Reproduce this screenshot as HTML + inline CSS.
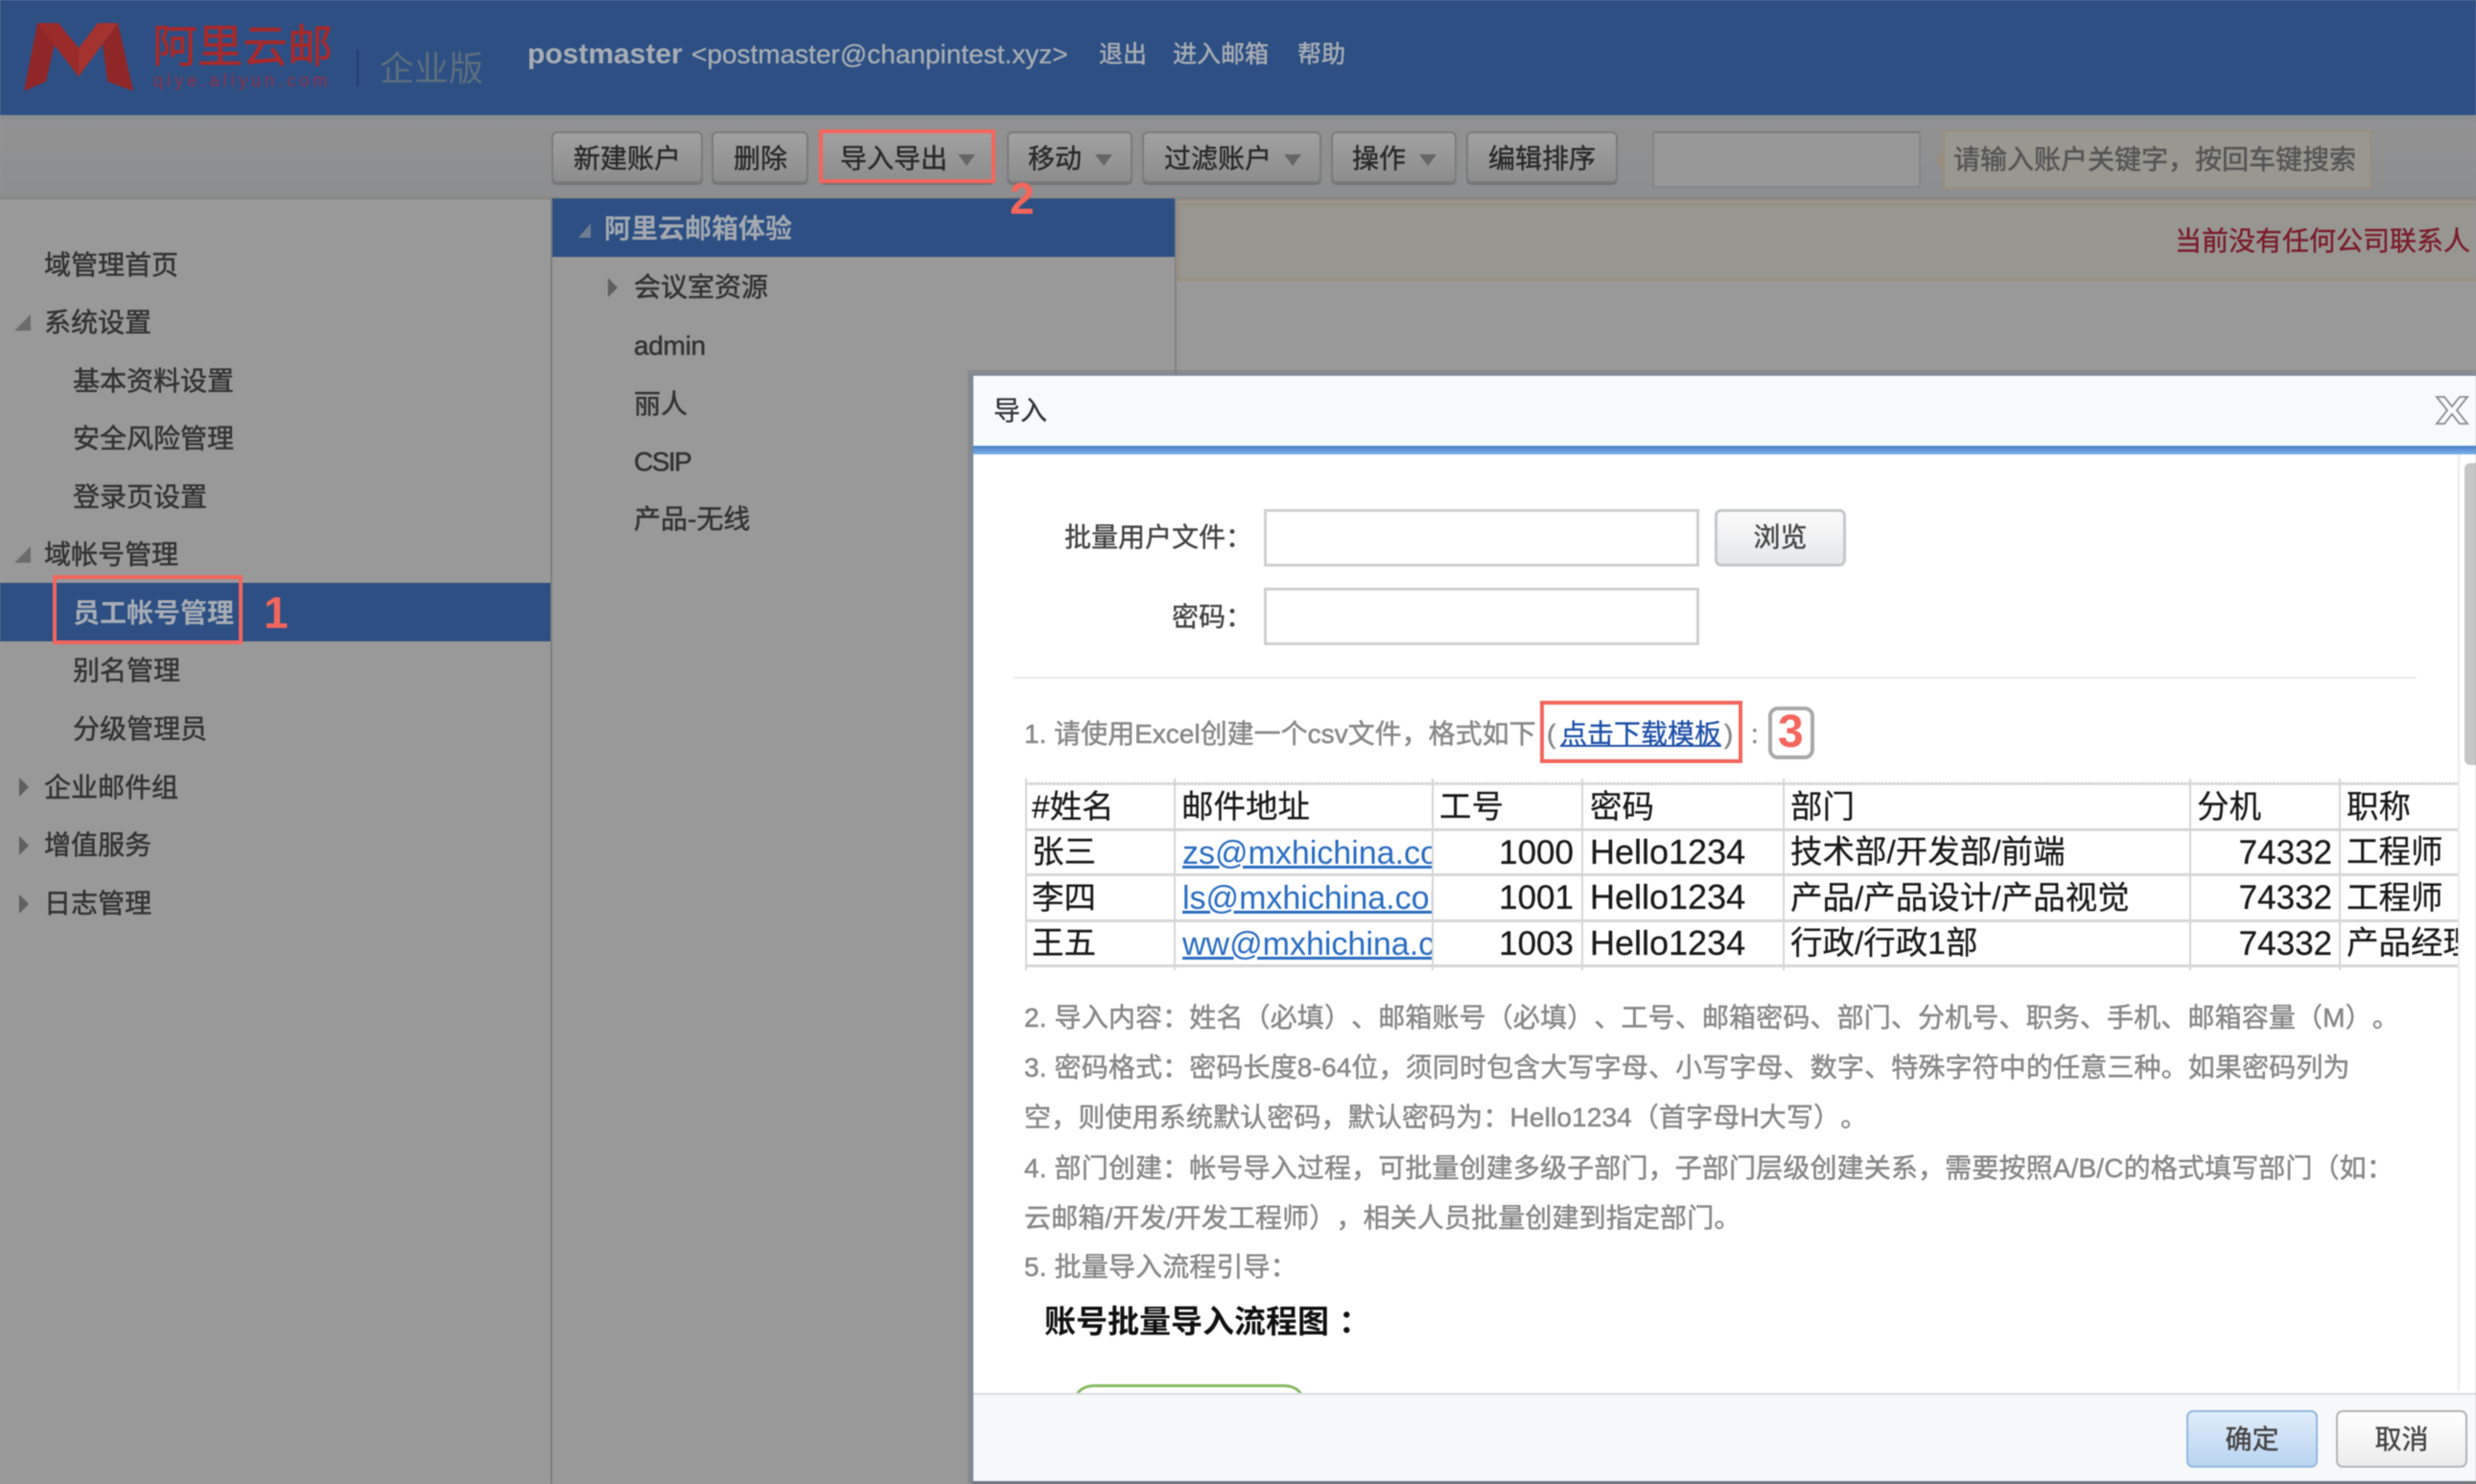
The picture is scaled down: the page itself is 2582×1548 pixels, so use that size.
<!DOCTYPE html>
<html lang="zh-CN"><head><meta charset="utf-8"><title>导入</title>
<style>
*{box-sizing:border-box}
html,body{margin:0;padding:0}
body{width:2582px;height:1548px;overflow:hidden;position:relative;background:#999;font-family:"Liberation Sans","Noto Sans CJK SC",sans-serif;font-size:28px;color:#333;filter:blur(.6px);text-spacing-trim:space-all;text-autospace:no-autospace}
.a{position:absolute}
.t{position:absolute;white-space:nowrap;line-height:40px;height:40px}
.side{color:#333;-webkit-text-stroke:.5px #333}
.btn{position:absolute;top:137px;height:54px;border:2px solid #7b7b7b;border-radius:6px;background:linear-gradient(#a1a1a1,#8d8d8d);box-shadow:0 2px 0 #747474;color:#2a2a2a;-webkit-text-stroke:.4px #2a2a2a;line-height:53px;padding-left:20px;white-space:nowrap}
.tri{position:absolute;top:22px;width:0;height:0;border-left:9px solid transparent;border-right:9px solid transparent;border-top:12px solid #666;-webkit-text-stroke:0}
.rarr{position:absolute;width:0;height:0;border-top:10px solid transparent;border-bottom:10px solid transparent;border-left:10px solid #5f5f5f}
.darr{position:absolute;width:0;height:0;border-left:17px solid transparent;border-bottom:17px solid #6c6c6c}
.in{position:absolute;left:1318px;width:454px;height:60px;border:3px solid #cfcfcf;background:#fff}
.g{color:#888;-webkit-text-stroke:.5px #888;letter-spacing:.14px}
.h{position:absolute;left:1070px;width:1493px;height:3px;background:#d6d6d6}
.v{position:absolute;top:812px;height:200px;width:2px;background:#d6d6d6}
.c{position:absolute;white-space:nowrap;line-height:44px;height:44px;font-size:33.5px;color:#1a1a1a;-webkit-text-stroke:.25px #1a1a1a;overflow:hidden}
.l{font-size:35px}
.hl{font-size:36px}
.lk{color:#2a6dc2;-webkit-text-stroke:0;text-decoration:underline;font-size:34px}
.red{position:absolute;border:4px solid #f4655c}
.num{position:absolute;color:#f4655c;font-weight:bold;font-size:46px;line-height:50px;height:50px}
</style></head><body>

<!-- header -->
<div class="a" style="left:0;top:0;width:2582px;height:120px;background:#2d4f84"></div>
<svg class="a" style="left:0;top:0" width="150" height="120" viewBox="0 0 150 120">
<polygon points="39,24 25,95 48,85 57,46" fill="#8f2729"/>
<polygon points="123,24 139,95 112,85 107,46" fill="#8f2729"/>
<polygon points="39,24 61,24 82,50 82,80" fill="#9a2b2b"/>
<polygon points="123,24 102,24 82,50 82,80" fill="#a4322f"/>
</svg>
<div class="t" style="left:159px;top:25px;font-size:47px;line-height:47px;height:47px;color:#a82a2b;-webkit-text-stroke:.6px #a82a2b">阿里云邮</div>
<div class="t" style="left:160px;top:72px;font-size:18px;line-height:24px;height:24px;letter-spacing:4.1px;color:#7c3858;-webkit-text-stroke:.4px #7c3858">qiye.aliyun.com</div>
<div class="a" style="left:372px;top:52px;width:2px;height:38px;background:#253f6c"></div>
<div class="t" style="left:396px;top:50px;font-size:36px;line-height:44px;height:44px;color:#5d6e7e">企业版</div>
<div class="t" style="left:550px;top:37px;font-size:30px;font-weight:bold;color:#a9adb3;letter-spacing:0">postmaster</div>
<div class="t" style="left:721px;top:37px;font-size:28px;color:#a9adb3;-webkit-text-stroke:.3px #a9adb3">&lt;postmaster@chanpintest.xyz&gt;</div>
<div class="t" style="left:1146px;top:37px;font-size:25px;color:#a9adb3;-webkit-text-stroke:.5px #a9adb3">退出</div>
<div class="t" style="left:1223px;top:37px;font-size:25px;color:#a9adb3;-webkit-text-stroke:.5px #a9adb3">进入邮箱</div>
<div class="t" style="left:1353px;top:37px;font-size:25px;color:#a9adb3;-webkit-text-stroke:.5px #a9adb3">帮助</div>

<!-- toolbar -->
<div class="a" style="left:0;top:120px;width:2582px;height:88px;background:linear-gradient(#8b8d91,#929293 10%,#8d8e8f);border-bottom:3px solid #878787"></div>
<div class="btn" style="left:575px;width:158px;padding-left:21px">新建账户</div>
<div class="btn" style="left:742px;width:101px;padding-left:21px">删除</div>
<div class="btn" style="left:854px;width:184px;padding-left:20px">导入导出<span class="tri" style="left:143px"></span></div>
<div class="btn" style="left:1050px;width:131px;padding-left:20px">移动<span class="tri" style="left:90px"></span></div>
<div class="btn" style="left:1191px;width:187px;padding-left:21px">过滤账户<span class="tri" style="left:146px"></span></div>
<div class="btn" style="left:1388px;width:131px;padding-left:20px">操作<span class="tri" style="left:90px"></span></div>
<div class="btn" style="left:1529px;width:158px;padding-left:21px">编辑排序</div>
<div class="a" style="left:1723px;top:137px;width:280px;height:59px;background:#989898;border:2px solid #858585;border-top-color:#7c7c7c"></div>
<div class="a" style="left:2026px;top:136px;width:447px;height:61px;background:#989890;border:2px solid #9a8d7c"></div>
<div class="a" style="left:2019px;top:155px;width:0;height:0;border-top:12px solid transparent;border-bottom:12px solid transparent;border-right:8px solid #9a8d7c"></div>
<div class="t" style="left:2037px;top:147px;color:#555;-webkit-text-stroke:.5px #555">请输入账户关键字，按回车键搜索</div>

<!-- sidebar -->
<div class="a" style="left:574px;top:207px;width:2px;height:1341px;background:#7f7f7f"></div>
<div class="a" style="left:0;top:608px;width:574px;height:61px;background:#2d4f84"></div>
<div class="t side" style="left:46px;top:257px">域管理首页</div>
<div class="darr" style="left:15px;top:328px"></div>
<div class="t side" style="left:46px;top:317px">系统设置</div>
<div class="t side" style="left:76px;top:378px">基本资料设置</div>
<div class="t side" style="left:76px;top:438px">安全风险管理</div>
<div class="t side" style="left:76px;top:499px">登录页设置</div>
<div class="darr" style="left:15px;top:570px"></div>
<div class="t side" style="left:46px;top:559px">域帐号管理</div>
<div class="t" style="left:76px;top:620px;color:#a8adb3;font-weight:bold">员工帐号管理</div>
<div class="t side" style="left:76px;top:680px">别名管理</div>
<div class="t side" style="left:76px;top:741px">分级管理员</div>
<div class="rarr" style="left:20px;top:811px"></div>
<div class="t side" style="left:46px;top:802px">企业邮件组</div>
<div class="rarr" style="left:20px;top:872px"></div>
<div class="t side" style="left:46px;top:862px">增值服务</div>
<div class="rarr" style="left:20px;top:933px"></div>
<div class="t side" style="left:46px;top:923px">日志管理</div>
<div class="red" style="left:55px;top:600px;width:198px;height:72px"></div>
<div class="num" style="left:275px;top:614px">1</div>

<!-- tree -->
<div class="a" style="left:1225px;top:207px;width:2px;height:200px;background:#828282"></div>
<div class="a" style="left:576px;top:207px;width:649px;height:61px;background:#2d4f84"></div>
<div class="a" style="left:603px;top:233px;width:0;height:0;border-left:13px solid transparent;border-bottom:15px solid #6d7d92"></div>
<div class="t" style="left:630px;top:219px;color:#a4a9af;font-weight:bold">阿里云邮箱体验</div>
<div class="rarr" style="left:634px;top:290px"></div>
<div class="t side" style="left:661px;top:280px">会议室资源</div>
<div class="t side" style="left:661px;top:341px;letter-spacing:-.3px">admin</div>
<div class="t side" style="left:661px;top:402px">丽人</div>
<div class="t side" style="left:661px;top:462px;letter-spacing:-1.5px">CSIP</div>
<div class="t side" style="left:661px;top:522px">产品-无线</div>

<!-- notice -->
<div class="a" style="left:1228px;top:208px;width:1354px;height:2px;background:#9a8d7c"></div>
<div class="a" style="left:1228px;top:212px;width:1354px;height:81px;background:#979690;border:2px solid #9a8b78;border-right:0"></div>
<div class="t" style="left:2268px;top:232px;color:#7c1c2c;-webkit-text-stroke:.4px #7c1c2c">当前没有任何公司联系人</div>

<!-- red box 2 -->
<div class="red" style="left:854px;top:135px;width:184px;height:56px"></div>
<div class="num" style="left:1053px;top:182px">2</div>

<!-- dialog -->
<div class="a" style="left:1009px;top:386px;width:1573px;height:1162px;background:rgba(90,100,115,.25)"></div>
<div class="a" style="left:1012px;top:390px;width:1570px;height:1158px;background:#fff;border-left:3px solid #7d8794;border-top:2px solid #7d8a9c;border-bottom:3px solid #6d7580"></div>
<div class="a" style="left:1015px;top:392px;width:1567px;height:73px;background:#f8f9fb"></div>
<div class="a" style="left:1015px;top:465px;width:1567px;height:9px;background:linear-gradient(#4680c4,#7db2ea)"></div>
<div class="t" style="left:1036px;top:409px;color:#333;-webkit-text-stroke:.3px #333">导入</div>
<svg class="a" style="left:2538px;top:412px" width="40" height="32" viewBox="0 0 40 32" fill="none" stroke="#8a8a8a" stroke-width="1.8">
<path d="M3 2h8l8 10 8-10h8l-11 14 11 14h-8l-8-10-8 10H3l11-14z"/></svg>

<!-- scrollbar -->
<div class="a" style="left:2563px;top:474px;width:2px;height:977px;background:#ececec"></div>
<div class="a" style="left:2570px;top:483px;width:12px;height:315px;background:#c6c6c6;border-radius:6px 0 0 6px"></div>

<!-- form -->
<div class="t" style="left:1110px;top:541px;color:#444;-webkit-text-stroke:.4px #444">批量用户文件：</div>
<div class="in" style="top:531px"></div>
<div class="a" style="left:1788px;top:531px;width:137px;height:60px;border:3px solid #c4c7ca;border-radius:7px;background:linear-gradient(#fbfbfb,#e6e7e9);text-align:center;line-height:54px;color:#444;-webkit-text-stroke:.4px #444">浏览</div>
<div class="t" style="left:1222px;top:624px;color:#444;-webkit-text-stroke:.4px #444">密码：</div>
<div class="in" style="top:613px"></div>
<div class="a" style="left:1057px;top:706px;width:1463px;height:2px;background:#e9e9e9"></div>

<div class="t g" style="left:1068px;top:746px;letter-spacing:0">1. 请使用Excel创建一个csv文件，格式如下</div>
<div class="t g" style="left:1613px;top:746px">(</div>
<div class="t" style="left:1627px;top:746px;color:#1d4fa9;text-decoration:underline;-webkit-text-stroke:.3px #1d4fa9">点击下载模板</div>
<div class="t g" style="left:1798px;top:746px">)</div>
<div class="t g" style="left:1826px;top:746px">:</div>
<div class="red" style="left:1606px;top:731px;width:211px;height:65px"></div>
<div class="a" style="left:1844px;top:737px;width:48px;height:55px;border:4px solid #a9a9a9;border-radius:10px"></div>
<div class="num" style="left:1854px;top:739px;font-size:48px">3</div>

<!-- table -->
<div class="h" style="top:816px;background:repeating-linear-gradient(90deg,#d0d0d0 0 2px,#e4e4e4 2px 4px)"></div>
<div class="h" style="top:864px"></div><div class="h" style="top:911px"></div><div class="h" style="top:959px"></div><div class="h" style="top:1006px"></div>
<div class="v" style="left:1069px"></div><div class="v" style="left:1224px"></div><div class="v" style="left:1493px"></div><div class="v" style="left:1649px"></div><div class="v" style="left:1859px"></div><div class="v" style="left:2283px"></div><div class="v" style="left:2439px"></div>

<div class="c" style="left:1076px;top:821px">#姓名</div><div class="c" style="left:1232px;top:821px">邮件地址</div><div class="c" style="left:1501px;top:821px">工号</div><div class="c" style="left:1658px;top:821px">密码</div><div class="c" style="left:1867px;top:821px">部门</div><div class="c" style="left:2291px;top:821px">分机</div><div class="c" style="left:2447px;top:821px">职称</div>

<div class="c" style="left:1076px;top:868px">张三</div>
<div class="c" style="left:1233px;top:868px;width:260px"><span class="lk">zs@mxhichina.com</span></div>
<div class="c l" style="left:1541px;width:100px;text-align:right;top:868px">1000</div>
<div class="c hl" style="left:1658px;top:867px">Hello1234</div>
<div class="c" style="left:1867px;top:868px">技术部/开发部/前端</div>
<div class="c l" style="left:2332px;width:100px;text-align:right;top:868px">74332</div>
<div class="c" style="left:2447px;top:868px;width:116px">工程师</div>

<div class="c" style="left:1076px;top:916px">李四</div>
<div class="c" style="left:1233px;top:915px;width:260px"><span class="lk">ls@mxhichina.com</span></div>
<div class="c l" style="left:1541px;width:100px;text-align:right;top:915px">1001</div>
<div class="c hl" style="left:1658px;top:914px">Hello1234</div>
<div class="c" style="left:1867px;top:916px">产品/产品设计/产品视觉</div>
<div class="c l" style="left:2332px;width:100px;text-align:right;top:915px">74332</div>
<div class="c" style="left:2447px;top:916px;width:116px">工程师</div>

<div class="c" style="left:1076px;top:963px">王五</div>
<div class="c" style="left:1233px;top:963px;width:260px"><span class="lk">ww@mxhichina.com</span></div>
<div class="c l" style="left:1541px;width:100px;text-align:right;top:963px">1003</div>
<div class="c hl" style="left:1658px;top:962px">Hello1234</div>
<div class="c" style="left:1867px;top:963px">行政/行政1部</div>
<div class="c l" style="left:2332px;width:100px;text-align:right;top:963px">74332</div>
<div class="c" style="left:2447px;top:963px;width:116px">产品经理</div>

<!-- notes -->
<div class="t g" style="left:1068px;top:1042px">2. 导入内容：姓名（必填）、邮箱账号（必填）、工号、邮箱密码、部门、分机号、职务、手机、邮箱容量（M）。</div>
<div class="t g" style="left:1068px;top:1094px">3. 密码格式：密码长度8-64位，须同时包含大写字母、小写字母、数字、特殊字符中的任意三种。如果密码列为</div>
<div class="t g" style="left:1068px;top:1146px">空，则使用系统默认密码，默认密码为：Hello1234（首字母H大写）。</div>
<div class="t g" style="left:1068px;top:1199px">4. 部门创建：帐号导入过程，可批量创建多级子部门，子部门层级创建关系，需要按照A/B/C的格式填写部门（如：</div>
<div class="t g" style="left:1068px;top:1251px">云邮箱/开发/开发工程师），相关人员批量创建到指定部门。</div>
<div class="t g" style="left:1068px;top:1302px">5. 批量导入流程引导：</div>
<div class="t" style="left:1089px;top:1359px;font-size:33px;font-weight:bold;color:#111">账号批量导入流程图<span style="margin-left:10px">：</span></div>
<div class="a" style="left:1121px;top:1444px;width:238px;height:30px;border:3px solid #86bb62;border-radius:20px/14px"></div>

<!-- footer -->
<div class="a" style="left:1015px;top:1453px;width:1567px;height:92px;background:#f7f8fa;border-top:2px solid #d9dce0"></div>
<div class="a" style="left:2280px;top:1471px;width:137px;height:60px;border:2px solid #93b8dc;border-radius:7px;background:linear-gradient(#e0edfa,#b9d4f0);text-align:center;line-height:57px;color:#444;-webkit-text-stroke:.4px #444">确定</div>
<div class="a" style="left:2436px;top:1471px;width:137px;height:60px;border:2px solid #b4b4b4;border-radius:7px;background:linear-gradient(#fff,#ececec);text-align:center;line-height:57px;color:#444;-webkit-text-stroke:.4px #444">取消</div>
</body></html>
